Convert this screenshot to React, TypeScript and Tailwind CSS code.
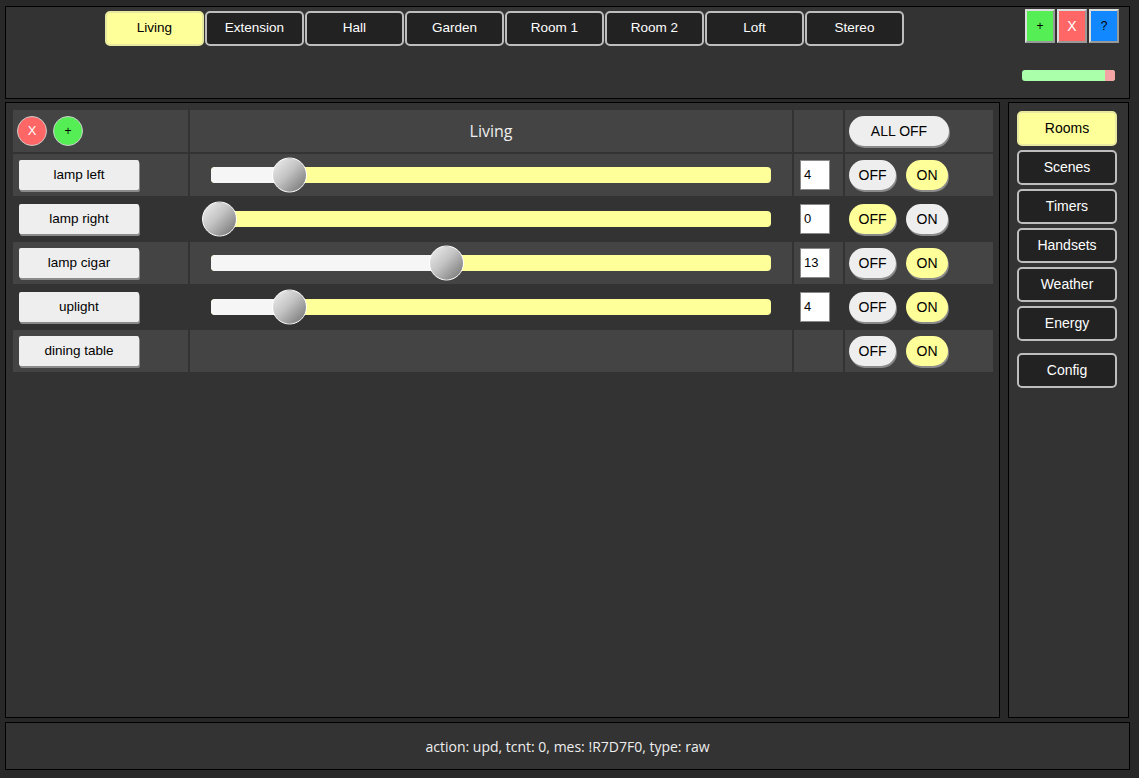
const tabs = ['Living', 'Extension', 'Hall', 'Garden', 'Room 1', 'Room 2', 'Loft', 'Stereo']
const side = ['Rooms', 'Scenes', 'Timers', 'Handsets', 'Weather', 'Energy']

type Device = { name: string; value?: number; on: boolean }

const devices: Device[] = [
  { name: 'lamp left', value: 4, on: true },
  { name: 'lamp right', value: 0, on: false },
  { name: 'lamp cigar', value: 13, on: true },
  { name: 'uplight', value: 4, on: true },
  { name: 'dining table', on: true },
]

const arial = "font-['Liberation_Sans',Arial,sans-serif]"
const comic = "font-['Open_Sans','DejaVu_Sans',sans-serif]"

function Slider({ value }: { value: number }) {
  const center = 8 + value * 17.5
  return (
    <div className="relative h-[16px] w-full rounded-[4px] bg-[#ffff99]">
      <div className="absolute left-0 top-0 h-full rounded-l-[4px] bg-[#f6f6f6]" style={{ width: center }} />
      <div
        className="absolute top-1/2 h-[35px] w-[35px] -translate-y-1/2 rounded-full border border-white bg-[linear-gradient(135deg,#f0f0f0_0%,#c4c4c4_45%,#6e6e6e_100%)]"
        style={{ left: center - 17.5 }}
      />
    </div>
  )
}

function Pill({ label, active, w }: { label: string; active: boolean; w: string }) {
  return (
    <div
      className={`${w} flex h-[30px] items-center justify-center rounded-full text-[14px] text-black shadow-[1px_2px_0_#8a8a8a] ${arial} ${
        active ? 'bg-[#ffff99]' : 'bg-[#eeeeee]'
      }`}
    >
      {label}
    </div>
  )
}

export default function App() {
  return (
    <div className="flex h-[778px] w-[1139px] flex-col overflow-hidden bg-[#282828] pl-[5px] pr-[9px] pt-[6px]">
      {/* top bar */}
      <div className="flex h-[93px] shrink-0 border border-black bg-[#333333]">
        <div className="flex gap-[1px] pl-[99px] pt-[4px]">
          {tabs.map((t, i) => (
            <div
              key={t}
              className={`flex h-[35px] w-[99px] items-center justify-center rounded-[5px] border-2 text-[13.5px] ${arial} ${
                i === 0 ? 'border-[#e8e8a0] bg-[#ffff99] text-black' : 'border-[#bdbdbd] bg-[#222222] text-white'
              }`}
            >
              {t}
            </div>
          ))}
        </div>
        <div className="ml-auto flex flex-col items-end pr-[10px] pt-[2px]">
          <div className="flex gap-[2px]">
            <div className={`flex h-[34px] w-[30px] items-center justify-center border-2 border-t-[#ddd] border-l-[#ddd] border-r-[#999] border-b-[#999] bg-[#55ee55] text-[12px] text-black ${arial}`}>+</div>
            <div className={`flex h-[34px] w-[30px] items-center justify-center border-2 border-t-[#ddd] border-l-[#ddd] border-r-[#999] border-b-[#999] bg-[#ff6666] text-[14px] text-white ${arial}`}>X</div>
            <div className={`flex h-[34px] w-[30px] items-center justify-center border-2 border-t-[#ddd] border-l-[#ddd] border-r-[#999] border-b-[#999] bg-[#1188ff] text-[12px] text-black ${arial}`}>?</div>
          </div>
          <div className="mr-[4px] mt-[27px] flex h-[11px] w-[93px] overflow-hidden rounded-[3px] bg-[#aaffaa]">
            <div className="ml-auto h-full w-[10px] bg-[#f4a4a4]" />
          </div>
        </div>
      </div>

      {/* middle */}
      <div className="mt-[3px] flex h-[616px] shrink-0 gap-[8px]">
        <div className="w-[995px] border border-black bg-[#333333] px-[7px] pt-[7px]">
          <div className="grid grid-cols-[175px_602px_49px_148px] gap-[2px]">
            {/* header */}
            <div className="flex h-[42px] items-center gap-[6px] bg-[#444444] pl-[4px]">
              <div className={`flex h-[30px] w-[30px] items-center justify-center rounded-full border border-[#ccc] bg-[#ff6666] text-[13px] text-white ${arial}`}>X</div>
              <div className={`flex h-[30px] w-[30px] items-center justify-center rounded-full border border-[#ccc] bg-[#55ee55] text-[12px] text-black ${arial}`}>+</div>
            </div>
            <div className={`flex h-[42px] items-center justify-center bg-[#444444] text-[16px] font-medium text-[#eeeeee] ${comic}`}>
              Living
            </div>
            <div className="h-[42px] bg-[#444444]" />
            <div className="flex h-[42px] items-center bg-[#444444] pl-[4px]">
              <Pill label="ALL OFF" active={false} w="w-[100px]" />
            </div>

            {devices.map((d, i) => {
              const bg = i % 2 === 0 ? 'bg-[#444444]' : 'bg-[#333333]'
              return [
                <div key={d.name + 'a'} className={`flex h-[42px] items-center pl-[6px] ${bg}`}>
                  <div
                    className={`flex h-[30px] w-[120px] items-center justify-center rounded-[2px] bg-[#eeeeee] text-[13.5px] text-black shadow-[1px_2px_0_#8a8a8a] ${arial}`}
                  >
                    {d.name}
                  </div>
                </div>,
                <div key={d.name + 'b'} className={`flex h-[42px] items-center px-[21px] ${bg}`}>
                  {d.value !== undefined && <Slider value={d.value} />}
                </div>,
                <div key={d.name + 'c'} className={`flex h-[42px] items-center pl-[6px] ${bg}`}>
                  {d.value !== undefined && (
                    <div className={`flex h-[30px] w-[30px] items-center border border-[#888] bg-white pl-[3px] text-[13px] text-black ${arial}`}>
                      {d.value}
                    </div>
                  )}
                </div>,
                <div key={d.name + 'd'} className={`flex h-[42px] items-center gap-[10px] pl-[4px] ${bg}`}>
                  <Pill label="OFF" active={!d.on} w="w-[47px]" />
                  <Pill label="ON" active={d.on} w="w-[42px]" />
                </div>,
              ]
            })}
          </div>
        </div>

        <div className="flex w-[121px] flex-col gap-[4px] border border-black bg-[#333333] pl-[8px] pt-[8px]">
          {side.map((s, i) => (
            <div
              key={s}
              className={`flex h-[35px] w-[100px] items-center justify-center rounded-[5px] border-2 text-[14px] ${arial} ${
                i === 0 ? 'border-[#e8e8a0] bg-[#ffff99] text-black' : 'border-[#bdbdbd] bg-[#222222] text-white'
              }`}
            >
              {s}
            </div>
          ))}
          <div
            className={`mt-[8px] flex h-[35px] w-[100px] items-center justify-center rounded-[5px] border-2 border-[#bdbdbd] bg-[#222222] text-[14px] text-white ${arial}`}
          >
            Config
          </div>
        </div>
      </div>

      {/* status */}
      <div className={`mt-[4px] flex h-[48px] shrink-0 items-center justify-center border border-black bg-[#333333] text-[14px] text-[#eeeeee] ${comic}`}>
        action: upd, tcnt: 0, mes: !R7D7F0, type: raw
      </div>
    </div>
  )
}
